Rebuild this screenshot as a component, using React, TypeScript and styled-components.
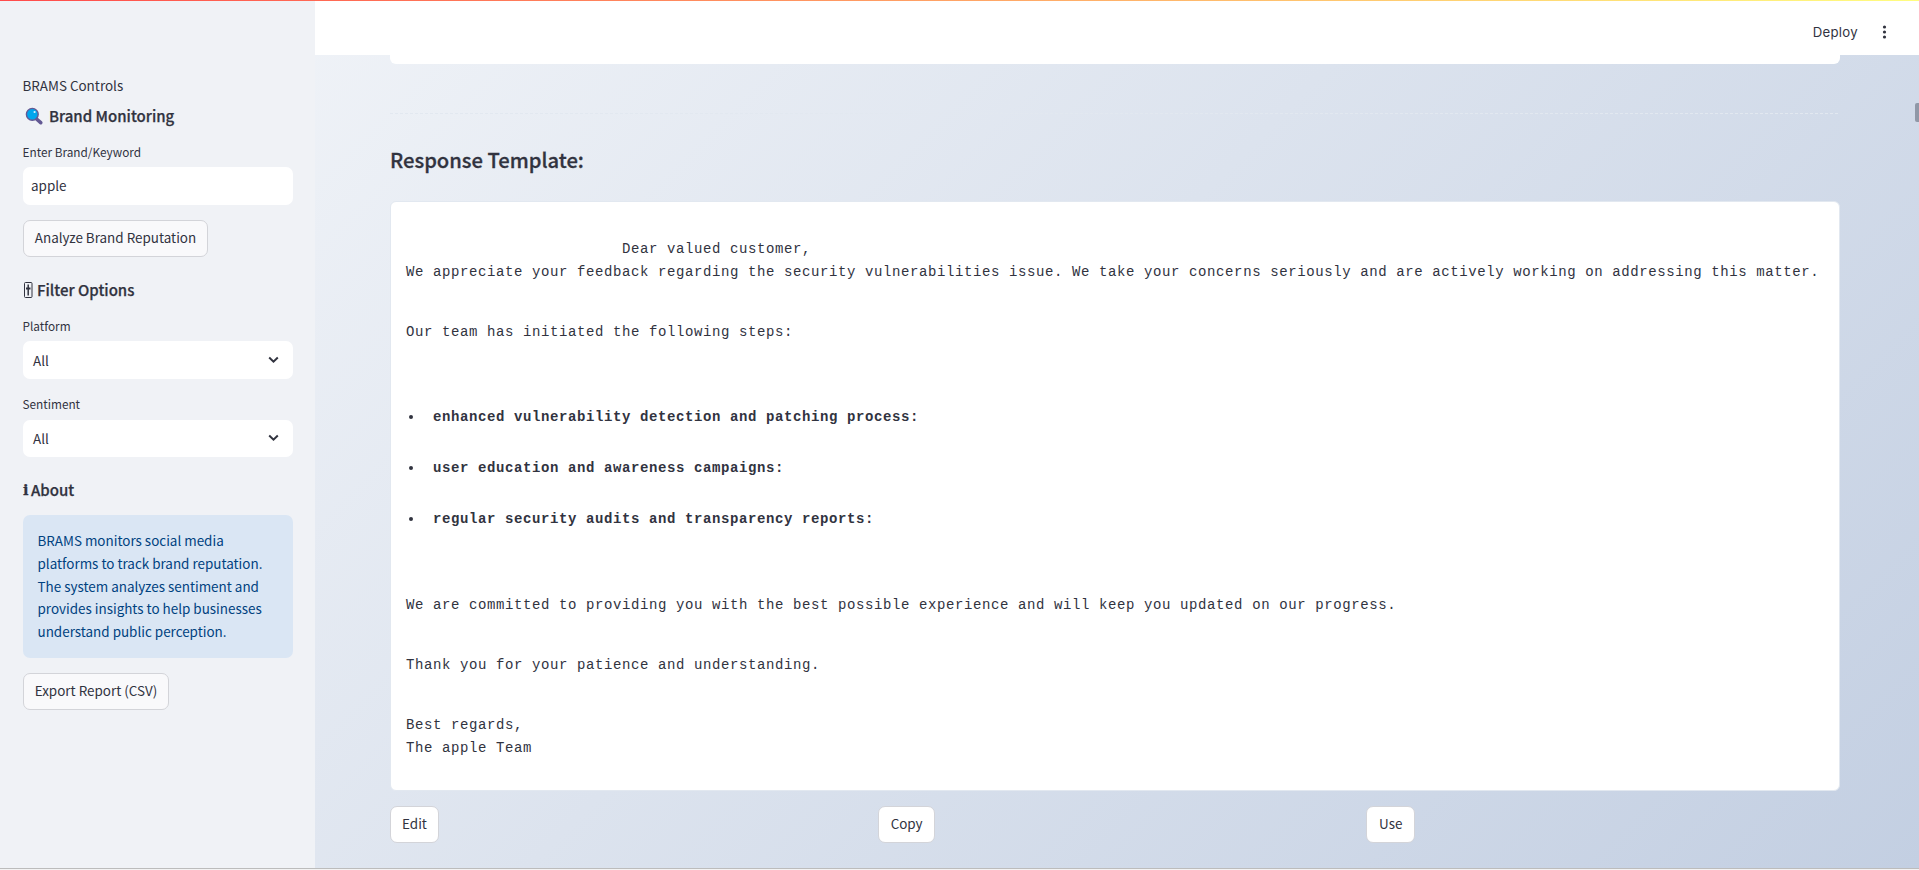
import React from 'react';
import styled, { createGlobalStyle } from 'styled-components';

const GlobalStyle = createGlobalStyle`
  * { box-sizing: border-box; }
  body {
    margin: 0;
    overflow: hidden;
    color: #31333f;
    font-family: 'Noto Sans CJK SC', 'Noto Sans', sans-serif;
    font-size: 13.45px;
  }
  h2, h3, p, ul { margin: 0; padding: 0; }
  button, input { font: inherit; color: inherit; }
`;

const Shell = styled.div`
  position: relative;
  display: flex;
  width: 1919px;
  height: 870px;
  overflow: hidden;
  background: linear-gradient(135deg, #f5f7fa 0%, #c3cfe2 100%);
`;

const Decoration = styled.div`
  position: absolute;
  inset: 0 0 auto 0;
  height: 1px;
  z-index: 3;
  background: linear-gradient(90deg, #ff4b4b, #fffd80);
`;

const BottomEdge = styled.div`
  position: absolute;
  inset: auto 0 0 0;
  height: 2px;
  z-index: 3;
  background: #f3f3f3;
  border-top: 1px solid #bcbcbc;
`;

const ScrollThumb = styled.div`
  position: absolute;
  top: 103px;
  right: 0;
  width: 4px;
  height: 19px;
  border-radius: 2px 0 0 2px;
  background: #9098a7;
`;

const Sidebar = styled.aside`
  flex: 0 0 315px;
  padding: 74px 22px 0 23px;
  background: #f0f2f6;
`;

const SidebarTitle = styled.p`
  height: 23px;
  line-height: 23px;
  text-indent: -0.5px;
`;

const SidebarHeading = styled.h3<{ $top: number; $gap?: number }>`
  display: flex;
  align-items: center;
  gap: ${(p) => p.$gap ?? 5}px;
  height: 24px;
  margin-top: ${(p) => p.$top}px;
  line-height: 24px;
  font-size: 15px;
  font-weight: 500;
  -webkit-text-stroke: 0.25px currentColor;
`;

const InfoGlyph = styled.span`
  width: 5px;
  font-family: 'DejaVu Serif', serif;
  font-size: 14.5px;
  font-weight: 700;
`;

const Label = styled.label<{ $top: number; $bottom?: number }>`
  display: block;
  height: 18px;
  margin: ${(p) => p.$top}px 0 ${(p) => p.$bottom ?? 6}px;
  line-height: 18px;
  font-size: 11.8px;
  text-indent: -0.5px;
`;

const TextInput = styled.input`
  display: block;
  width: 270px;
  height: 38px;
  padding: 0 8px 2px;
  border: 0;
  border-radius: 7px;
  background: #fff;
  outline: 0;
`;

const Select = styled.div<{ $height?: number }>`
  display: flex;
  align-items: center;
  justify-content: space-between;
  width: 270px;
  height: ${(p) => p.$height ?? 38}px;
  padding: 0 14px 1px 10px;
  border-radius: 7px;
  background: #fff;
`;

const Button = styled.button<{ $width: number; $top?: number; $solid?: boolean }>`
  display: block;
  width: ${(p) => p.$width}px;
  height: 37px;
  margin-top: ${(p) => p.$top ?? 0}px;
  padding: 0 0 2px;
  border: 1px solid #d3d4d9;
  border-radius: 7px;
  background: ${(p) => (p.$solid ? '#fff' : '#f9f9fb')};
  line-height: 33px;
  white-space: nowrap;
`;

const InfoBox = styled.div`
  width: 270px;
  height: 143px;
  margin-top: 13px;
  padding: 14px 14px 0 14.5px;
  border-radius: 7px;
  background: #dae6f4;
  color: #004280;
  line-height: 22.8px;
  white-space: pre;
`;

const Main = styled.main`
  flex: 1;
  display: flex;
  flex-direction: column;
`;

const Header = styled.header`
  display: flex;
  flex: 0 0 55px;
  align-items: center;
  justify-content: flex-end;
  gap: 24px;
  padding: 9px 32px 0 0;
  background: #fff;
`;

const Deploy = styled.span`
  font-family: Inter, sans-serif;
  font-size: 13.2px;
  letter-spacing: 0.3px;
  line-height: 18px;
`;

const Content = styled.div`
  width: 1450px;
  margin-left: 75px;
`;

const PreviousCard = styled.div`
  height: 9px;
  border-radius: 0 0 6px 6px;
  background: #fff;
`;

const Divider = styled.div`
  height: 1px;
  margin-top: 49px;
  background: repeating-linear-gradient(90deg, #e2e8f0 0 3px, transparent 3px 5px);
`;

const Title = styled.h2`
  height: 32px;
  margin-top: 30px;
  line-height: 32px;
  font-size: 20.2px;
  font-weight: 500;
  -webkit-text-stroke: 0.3px currentColor;
`;

const Letter = styled.div`
  height: 590px;
  margin-top: 25px;
  padding: 36px 15px 0;
  border: 1px solid #e2e8f0;
  border-radius: 6px;
  background: #fff;
  font-family: 'Courier New', 'Liberation Mono', monospace;
  font-size: 14px;
  letter-spacing: 0.6px;
  line-height: 23px;
`;

const Paragraph = styled.p<{ $top?: number }>`
  margin-top: ${(p) => p.$top ?? 0}px;
  white-space: pre;
`;

const Steps = styled.ul`
  display: flex;
  flex-direction: column;
  gap: 28px;
  margin-top: 62px;
  list-style: none;
  font-weight: 700;
`;

const Step = styled.li`
  display: flex;
  align-items: center;
  gap: 20px;
  padding-left: 3px;
  &::before {
    content: '';
    width: 4px;
    height: 4px;
    margin-bottom: 2px;
    border-radius: 50%;
    background: #31333f;
  }
`;

const Actions = styled.div`
  display: grid;
  grid-template-columns: repeat(3, 1fr);
  gap: 14.4px;
  margin-top: 15px;
`;

const Chevron = () => (
  <svg width="11" height="8" viewBox="0 0 11 8" fill="none" stroke="#31333f" strokeWidth="2">
    <path d="M1.2 1.5 5.5 5.6 9.8 1.5" />
  </svg>
);

const Magnifier = () => (
  <svg width="21" height="18" viewBox="0 0 21 18">
    <path d="M13 11.5 17.7 15.7" stroke="#635994" strokeWidth="3.6" strokeLinecap="round" />
    <circle cx="9.3" cy="7.3" r="5.9" fill="#00a6ed" stroke="#635994" strokeWidth="1.4" />
    <circle cx="11.6" cy="5" r="1.1" fill="#d5f3ff" />
  </svg>
);

const SliderIcon = () => (
  <svg width="10" height="18" viewBox="0 0 10 18" fill="none" stroke="#31333f">
    <rect x="1.5" y="1.5" width="7.5" height="15" rx="1" strokeWidth="1" />
    <path d="M5.2 3.5V14.5" strokeWidth="1.5" />
    <path d="M3 7.5H7.5" strokeWidth="2" />
  </svg>
);

const MenuDots = () => (
  <svg width="5" height="14" viewBox="0 0 5 14" fill="#31333f">
    <circle cx="2.5" cy="2" r="1.6" />
    <circle cx="2.5" cy="7" r="1.6" />
    <circle cx="2.5" cy="12" r="1.6" />
  </svg>
);

const steps = [
  'enhanced vulnerability detection and patching process:',
  'user education and awareness campaigns:',
  'regular security audits and transparency reports:',
];

const about = `BRAMS monitors social media
platforms to track brand reputation.
The system analyzes sentiment and
provides insights to help businesses
understand public perception.`;

const greeting = `${' '.repeat(24)}Dear valued customer,
We appreciate your feedback regarding the security vulnerabilities issue. We take your concerns seriously and are actively working on addressing this matter.`;

export default function App() {
  return (
    <Shell>
      <GlobalStyle />
      <Decoration />
      <Sidebar>
        <SidebarTitle>BRAMS Controls</SidebarTitle>
        <SidebarHeading $top={7}>
          <Magnifier />
          Brand Monitoring
        </SidebarHeading>
        <Label $top={15}>Enter Brand/Keyword</Label>
        <TextInput defaultValue="apple" />
        <Button $width={185} $top={15}>Analyze Brand Reputation</Button>
        <SidebarHeading $top={21} $gap={4}>
          <SliderIcon />
          Filter Options
        </SidebarHeading>
        <Label $top={15}>Platform</Label>
        <Select>
          All
          <Chevron />
        </Select>
        <Label $top={16} $bottom={7}>Sentiment</Label>
        <Select $height={37}>
          All
          <Chevron />
        </Select>
        <SidebarHeading $top={21} $gap={3}>
          <InfoGlyph>i</InfoGlyph>
          About
        </SidebarHeading>
        <InfoBox>{about}</InfoBox>
        <Button $width={146} $top={15}>Export Report (CSV)</Button>
      </Sidebar>
      <Main>
        <Header>
          <Deploy>Deploy</Deploy>
          <MenuDots />
        </Header>
        <Content>
          <PreviousCard />
          <Divider />
          <Title>Response Template:</Title>
          <Letter>
            <Paragraph>{greeting}</Paragraph>
            <Paragraph $top={37}>Our team has initiated the following steps:</Paragraph>
            <Steps>
              {steps.map((step) => (
                <Step key={step}>{step}</Step>
              ))}
            </Steps>
            <Paragraph $top={63}>
              We are committed to providing you with the best possible experience and will keep you updated on our progress.
            </Paragraph>
            <Paragraph $top={37}>Thank you for your patience and understanding.</Paragraph>
            <Paragraph $top={37}>{'Best regards,\nThe apple Team'}</Paragraph>
          </Letter>
          <Actions>
            <Button $width={49} $solid>Edit</Button>
            <Button $width={57} $solid>Copy</Button>
            <Button $width={49} $solid>Use</Button>
          </Actions>
        </Content>
      </Main>
      <ScrollThumb />
      <BottomEdge />
    </Shell>
  );
}
